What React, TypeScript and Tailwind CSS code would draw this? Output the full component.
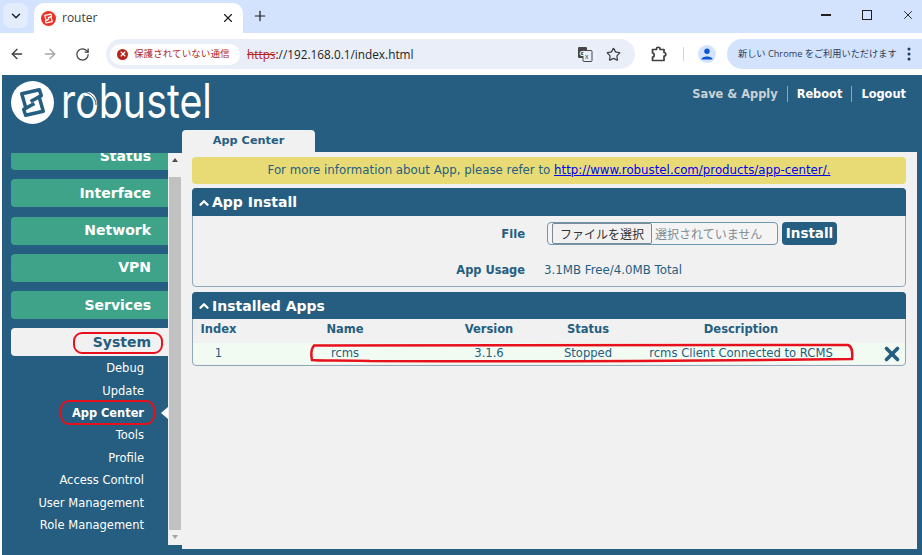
import { ArrowLeft, ArrowRight, ChevronDown, ChevronUp, Plus, RotateCw, Star, X } from 'lucide-react';

const mainMenu = ['Status', 'Interface', 'Network', 'VPN', 'Services'];
const subMenu = ['Debug', 'Update', 'App Center', 'Tools', 'Profile', 'Access Control', 'User Management', 'Role Management'];

const LogoMark = ({ size, bg, fg }: { size: number; bg: string; fg: string }) => (
    <svg width={size} height={size} viewBox="0 0 44 44" fill="none" className="shrink-0">
        <circle cx="22" cy="22" r="22" fill={bg} />
        <path d="M15 27 L11 13 L29 9 L31 15 L20 21" stroke={fg} strokeWidth="3.6" strokeLinejoin="round" />
        <path d="M29 17 L33 31 L15 35 L13 29 L24 23" stroke={fg} strokeWidth="3.6" strokeLinejoin="round" />
    </svg>
);

const ChromeBar = () => (
    <>
        {/* Tab strip */}
        <div className="h-[33px] bg-[#d3e3fd] flex items-start relative shrink-0">
            <div className="ml-[3px] mt-[3px] w-[25px] h-[25px] rounded-lg bg-[#e3ecfc] flex items-center justify-center">
                <ChevronDown size={14} strokeWidth={2.5} className="text-[#1f1f1f]" />
            </div>
            <div className="ml-[6px] mt-[3px] w-[209px] h-[30px] bg-white rounded-t-[10px] flex items-center pl-[7px] pr-[8px]">
                <LogoMark size={15} bg="#ee3124" fg="#ffffff" />
                <span className="ml-[6px] text-[12px] text-[#3c4043] font-['Open_Sans',sans-serif] flex-1">router</span>
                <X size={14} strokeWidth={2} className="text-[#1f1f1f]" />
            </div>
            <Plus size={16} strokeWidth={1.8} className="ml-[9px] mt-[8px] text-[#1f1f1f]" />
            <div className="ml-auto flex items-center h-[30px] text-[#1f1f1f]">
                <div className="w-[10px] h-[2px] bg-[#1f1f1f] mr-[31px]" />
                <div className="w-[10px] h-[10px] border-[1.5px] border-[#1f1f1f] mr-[29px]" />
                <X size={14} strokeWidth={1.6} className="mr-[7px]" />
            </div>
        </div>
        {/* Toolbar */}
        <div className="h-[42px] bg-white flex items-center shrink-0 font-['Open_Sans','Noto_Sans_CJK_JP',sans-serif]">
            <ArrowLeft size={16} strokeWidth={2} className="ml-[9px] text-[#3c4043]" />
            <ArrowRight size={16} strokeWidth={2} className="ml-[17px] text-[#a3a5a8]" />
            <RotateCw size={15} strokeWidth={2} className="ml-[17px] text-[#3c4043]" />
            <div className="ml-[16px] w-[529px] h-[30px] bg-[#e9eef8] rounded-full flex items-center pl-[4px] pr-[14px]">
                <div className="w-[130px] h-[21px] bg-white rounded-full flex items-center pl-[7px] shrink-0">
                    <span className="w-[11px] h-[11px] rounded-full bg-[#b3261e] flex items-center justify-center shrink-0">
                        <X size={8} strokeWidth={3.5} className="text-white" />
                    </span>
                    <span className="ml-[6px] text-[9.6px] text-[#b3261e] whitespace-nowrap">保護されていない通信</span>
                </div>
                <span className="ml-[7px] pt-[1px] text-[11.8px] text-[#1f1f1f]">
                    <span className="text-[#b3261e] line-through">https</span>://192.168.0.1/index.html
                </span>
                <svg width="16" height="16" viewBox="0 0 16 16" className="ml-auto mr-[13px]">
                    <rect x="1" y="1" width="9" height="11" rx="1" fill="#474747" />
                    <rect x="6" y="4.5" width="9" height="11" rx="1" fill="#e9eef8" stroke="#474747" />
                    <text x="2.5" y="9.5" fontSize="7" fontWeight="700" fill="#ffffff" fontFamily="Liberation Sans">G</text>
                    <text x="8" y="13" fontSize="7" fill="#474747" fontFamily="Noto Sans CJK JP">x</text>
                </svg>
                <Star size={15} strokeWidth={2} className="text-[#3c4043]" />
            </div>
            <svg width="16" height="16" viewBox="0 0 16 16" fill="none" className="ml-[16px]">
                <path d="M1.5 3.5 H5.5 V2.5 C5.5 0.8 9 0.8 9 2.5 V3.5 H13 V6.5 C15.4 6.5 15.4 10 13 10 V14.5 H1.5 V11 C3.8 11 3.8 7 1.5 7 Z" stroke="#3c4043" strokeWidth="1.7" strokeLinejoin="round" />
            </svg>
            <div className="ml-[16px] w-[1px] h-[14px] bg-[#c7d7f2]" />
            <div className="ml-[14px] w-[18px] h-[18px] rounded-full bg-[#d3e3fd] flex items-center justify-center overflow-hidden">
                <svg width="12" height="12" viewBox="0 0 12 12">
                    <circle cx="6" cy="3.2" r="2.7" fill="#0b57d0" />
                    <path d="M0.5 11.5 C0.5 7.5 11.5 7.5 11.5 11.5 Z" fill="#0b57d0" />
                </svg>
            </div>
            <div className="ml-[11px] w-[195px] h-[30px] bg-[#d3e3fd] rounded-l-full flex items-center pl-[11px]">
                <span className="text-[9.2px] text-[#2b3a55] whitespace-nowrap">新しい Chrome をご利用いただけます</span>
                <svg width="4" height="14" viewBox="0 0 4 14" className="ml-auto mr-[11px] shrink-0">
                    <circle cx="2" cy="2" r="1.5" fill="#1f3a5f" />
                    <circle cx="2" cy="7" r="1.5" fill="#1f3a5f" />
                    <circle cx="2" cy="12" r="1.5" fill="#1f3a5f" />
                </svg>
            </div>
        </div>
    </>
);

const Header = () => (
    <div className="h-[55px] flex items-start shrink-0 pl-[9px] pr-[16px]">
        <div className="mt-[6px]">
            <LogoMark size={43} bg="#ffffff" fg="#255e80" />
        </div>
        <div className="relative ml-[7px] mt-[-3px] w-[147px] h-[50px]">
            <span className="block origin-left scale-x-[0.82] text-[48px] leading-[58px] font-normal text-white font-['Inter',sans-serif] whitespace-nowrap">robustel</span>
            <svg width="16" height="16" viewBox="0 0 16 16" fill="none" className="absolute left-[21px] top-[18px]">
                <path d="M1 2 C8 2 14 8 14 15 M1 6 C6 6 10 10 10 15" stroke="#255e80" strokeWidth="1" />
            </svg>
        </div>
        <div className="ml-auto mt-[11px] flex items-center text-[11.4px] font-bold leading-[16px]">
            <span className="text-[#c9d2d6] pr-[9px] border-r border-[#8aa8ba]">Save &amp; Apply</span>
            <span className="text-white px-[9px] border-r border-[#8aa8ba]">Reboot</span>
            <span className="text-white pl-[9px]">Logout</span>
        </div>
    </div>
);

const Sidebar = () => (
    <div className="w-[180px] shrink-0 pl-[9px] pt-[23px] flex items-start">
        <div className="w-[157px] h-[392px] overflow-hidden">
            <div className="-mt-[11px] flex flex-col gap-[9.3px]">
                {mainMenu.map((m) => (
                    <div key={m} className="h-[28px] shrink-0 bg-[#3fa38a] rounded-l-[4px] text-white font-bold text-[14px] flex items-center justify-end pr-[17px]">
                        {m}
                    </div>
                ))}
                <div className="relative h-[28px] shrink-0 bg-[#f1f1f1] rounded-l-[4px] text-[#255e80] font-bold text-[14px] flex items-center justify-end pr-[17px]">
                    System
                    <span className="absolute left-[62px] top-[4px] w-[90px] h-[22px] border-[2.5px] border-[#e8101c] rounded-[9px]" />
                </div>
            </div>
            <div className="mt-[1px] flex flex-col">
                {subMenu.map((s, i) => (
                    <div key={s} className={`relative h-[22.45px] flex items-center justify-end pr-[24px] text-white ${i === 2 ? 'font-bold text-[11.4px]' : 'text-[11.5px]'}`}>
                        {s}
                        {i === 2 && (
                            <>
                                <span className="absolute left-[49px] top-[-2px] w-[95px] h-[25px] border-[2.5px] border-[#e8101c] rounded-[9px]" />
                                <span className="absolute right-0 top-[5px] w-0 h-0 border-y-[6px] border-y-transparent border-r-[7px] border-r-white" />
                            </>
                        )}
                    </div>
                ))}
            </div>
        </div>
        {/* Scrollbar */}
        <div className="w-[14px] h-[392px] bg-[#f1f1f1] flex flex-col items-center">
            <div className="h-[24px] pt-[5px]">
                <div className="w-0 h-0 border-x-[3.5px] border-x-transparent border-b-[4px] border-b-[#505050]" />
            </div>
            <div className="w-[12px] h-[353px] bg-[#c1c1c1]" />
            <div className="pt-[5px]">
                <div className="w-0 h-0 border-x-[3.5px] border-x-transparent border-t-[4px] border-t-[#a3a3a3]" />
            </div>
        </div>
    </div>
);

const SectionHead = ({ title, tall }: { title: string; tall?: boolean }) => (
    <div className={`bg-[#255e80] rounded-t-[4px] flex items-center pl-[5px] pt-[1px] text-white font-bold text-[14px] ${tall ? 'h-[28px]' : 'h-[27px]'}`}>
        <ChevronUp size={14} strokeWidth={4} className="mr-[1px]" />
        {title}
    </div>
);

const Content = () => (
    <div className="w-[735px] shrink-0 flex flex-col">
        <div className="w-[133px] h-[22px] pt-[1px] bg-[#f1f1f1] rounded-t-[4px] flex items-center justify-center text-[#255e80] font-bold text-[11.3px]">
            App Center
        </div>
        <div className="h-[397px] bg-[#f1f1f1] pl-[10px] pr-[11px] pt-[5px] flex flex-col">
            <div className="h-[27px] pt-[1px] bg-[#e8db75] rounded-[4px] flex items-center justify-center text-[11.8px] text-[#255e80]">
                <span>For more information about App, please refer to&nbsp;</span>
                <a href="#" className="text-[#0000ee] underline">http://www.robustel.com/products/app-center/.</a>
            </div>
            <div className="mt-[4px] h-[99px] border border-[#8fa9ba] rounded-[4px] flex flex-col">
                <div className="-mx-[1px] -mt-[1px]"><SectionHead title="App Install" tall /></div>
                <div className="mt-[6px] flex items-center h-[23px]">
                    <div className="w-[332px] pt-[2px] text-right text-[11.6px] font-bold text-[#255e80]">File</div>
                    <div className="ml-[22px] w-[231px] h-[23px] border border-[#6f97ae] rounded-[4px] flex items-center pl-[4px] bg-[#f4f4f4]">
                        <div className="w-[100px] h-[21px] border border-[#7b8a94] rounded-[2px] bg-[#f1f1f1] flex items-center justify-center text-[12px] text-[#333333] font-['Noto_Sans_CJK_JP',sans-serif]">ファイルを選択</div>
                        <span className="ml-[3px] text-[12px] text-[#7d8b94] font-['Noto_Sans_CJK_JP',sans-serif]">選択されていません</span>
                    </div>
                    <div className="ml-[4px] w-[55px] h-[23px] bg-[#255e80] rounded-[4px] flex items-center justify-center text-white font-bold text-[13.5px]">Install</div>
                </div>
                <div className="mt-[16px] flex items-center h-[20px]">
                    <div className="w-[332px] text-right text-[11.4px] font-bold text-[#255e80]">App Usage</div>
                    <div className="ml-[19px] text-[11.8px] text-[#255e80]">3.1MB Free/4.0MB Total</div>
                </div>
            </div>
            <div className="mt-[5px] h-[74px] border border-[#8fa9ba] rounded-[4px] flex flex-col">
                <div className="-mx-[1px] -mt-[1px]"><SectionHead title="Installed Apps" /></div>
                <div className="grid grid-cols-[51px_202px_86px_112px_194px_1fr] h-[24px] pb-[2px] items-center text-center text-[11.5px] font-bold text-[#255e80]">
                    <div>Index</div>
                    <div>Name</div>
                    <div>Version</div>
                    <div>Status</div>
                    <div>Description</div>
                    <div />
                </div>
                <div className="relative grid grid-cols-[51px_202px_86px_112px_194px_1fr] h-[21px] pb-[2px] items-center text-center text-[11.6px] text-[#255e80] bg-[#f2fbf2] rounded-b-[4px]">
                    <div>1</div>
                    <div>rcms</div>
                    <div>3.1.6</div>
                    <div>Stopped</div>
                    <div className="whitespace-nowrap">rcms Client Connected to RCMS</div>
                    <div className="flex justify-end pr-[2px]">
                        <X size={22} strokeWidth={4} className="text-[#255e80]" />
                    </div>
                    <svg width="546" height="20" viewBox="0 0 546 20" fill="none" className="absolute left-[117px] top-0">
                        <path d="M4 2.5 C120 1 300 2 538 2 C541 3 543 8 542 16 C400 18 250 19 60 18 C30 17 10 18 2 17 C1 12 1 6 4 2.5 Z" stroke="#e8101c" strokeWidth="2.5" />
                    </svg>
                </div>
            </div>
        </div>
    </div>
);

export default function App() {
    return (
        <div className="w-[922px] h-[555px] overflow-hidden flex flex-col font-['DejaVu_Sans',sans-serif]">
            <ChromeBar />
            <div className="flex-1 min-h-0 bg-[#255e80] border-l-2 border-white flex flex-col">
                <Header />
                <div className="flex shrink-0">
                    <Sidebar />
                    <Content />
                </div>
                <div className="mt-[4px] pl-[328px] text-[11px] text-white whitespace-nowrap">Copyright © 2023 Robustel Technologies. All rights reserved.</div>
            </div>
        </div>
    );
}
